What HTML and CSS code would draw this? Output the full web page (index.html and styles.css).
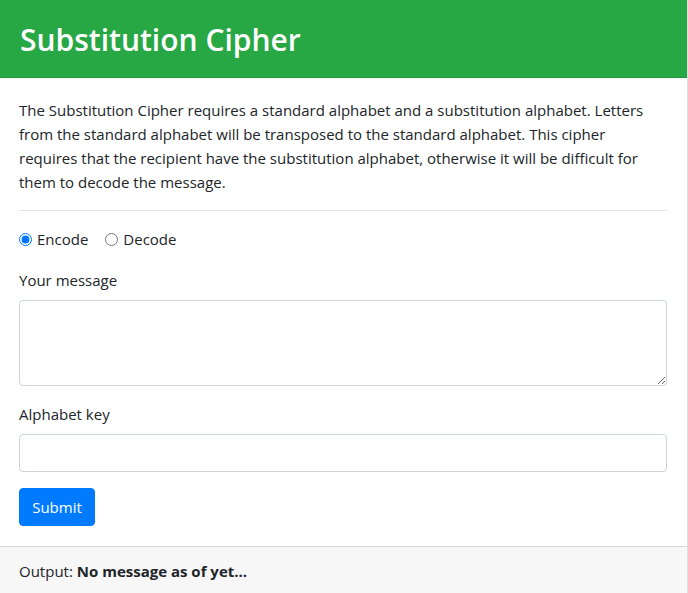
FILE: index.html
```html
<!DOCTYPE html>
<html lang="en">
<head>
<meta charset="utf-8">
<title>Substitution Cipher</title>
<link rel="stylesheet" href="styles.css">
</head>
<body>
<div class="card">
  <div class="card-header">
    <h1 class="title">Substitution Cipher</h1>
  </div>
  <div class="card-body">
    <p class="intro">The Substitution Cipher requires a standard alphabet and a substitution alphabet. Letters from the standard alphabet will be transposed to the standard alphabet. This cipher requires that the recipient have the substitution alphabet, otherwise it will be difficult for them to decode the message.</p>
    <hr class="divider">
    <form class="form">
      <div class="form-group radios">
        <label class="radio-item"><input type="radio" name="mode" class="radio" checked> Encode</label>
        <label class="radio-item"><input type="radio" name="mode" class="radio"> Decode</label>
      </div>
      <div class="form-group">
        <label class="label" for="msg">Your message</label>
        <textarea id="msg" class="control textarea" rows="3"></textarea>
      </div>
      <div class="form-group">
        <label class="label" for="key">Alphabet key</label>
        <input id="key" class="control input" type="text">
      </div>
      <button type="button" class="btn">Submit</button>
    </form>
  </div>
  <div class="card-footer">Output: <strong class="out">No message as of yet...</strong></div>
</div>
</body>
</html>
```

FILE: styles.css
```css
* { box-sizing: border-box; }
html, body { margin: 0; padding: 0; background: #fff; }
body {
  font-family: "Open Sans", "Noto Sans", sans-serif;
  font-size: 15px;
  line-height: 24px;
  color: #212529;
}
.card {
  margin: -1px 0 0 -2px;
  width: 690px;
  border: 1px solid rgba(0,0,0,.125);
  display: flex;
  flex-direction: column;
}
.card-header {
  background: #28a745;
  height: 78px;
  border-bottom: 1px solid rgba(0,0,0,.125);
  padding: 0 21px;
  display: flex;
  align-items: center;
}
.title {
  margin: 3px 0 0 0;
  color: #fff;
  font-size: 30px;
  font-weight: 600;
  line-height: 36px;
}
.card-body { padding: 20px; }
.intro { margin: 0 0 16px; }
.divider {
  margin: 0 0 16px;
  border: 0;
  border-top: 1px solid rgba(0,0,0,.1);
  height: 0;
}
.form { margin: 0; }
.form-group {
  margin-bottom: 16px;
  display: flex;
  flex-direction: column;
}
.radios { flex-direction: row; gap: 17px; height: 25px; }
.radio-item { display: inline-flex; align-items: center; height: 24px; }
.radio { margin: 0 5px 0 0; width: 13px; height: 13px; accent-color: #0075ff; }
.label { margin-bottom: 8px; }
.control {
  display: block;
  width: 100%;
  border: 1px solid #ced4da;
  border-radius: 4px;
  font: inherit;
  padding: 6px 12px;
  color: #495057;
  background: #fff;
}
.textarea { height: 86px; resize: vertical; }
.input { height: 38px; }
.btn {
  font: inherit;
  color: #fff;
  background: #007bff;
  border: 1px solid #007bff;
  border-radius: 4px;
  height: 38px;
  padding: 0 12px;
  width: 76px;
}
.card-footer {
  background: #f7f7f7;
  border-top: 1px solid rgba(0,0,0,.125);
  padding: 12px 20px;
  height: 60px;
}
.out { font-weight: 700; }
```
